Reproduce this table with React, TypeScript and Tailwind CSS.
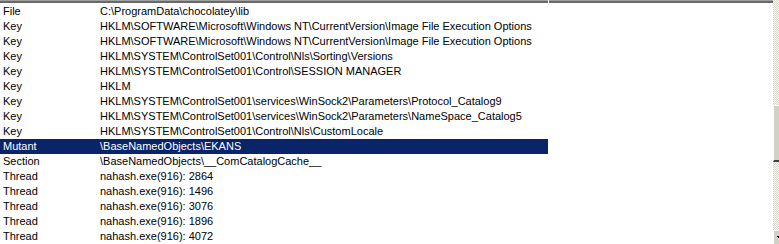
import React from 'react';

type Handle = { type: string; name: string };

const handles: Handle[] = [
    { type: 'File', name: 'C:\\ProgramData\\chocolatey\\lib' },
    { type: 'Key', name: 'HKLM\\SOFTWARE\\Microsoft\\Windows NT\\CurrentVersion\\Image File Execution Options' },
    { type: 'Key', name: 'HKLM\\SOFTWARE\\Microsoft\\Windows NT\\CurrentVersion\\Image File Execution Options' },
    { type: 'Key', name: 'HKLM\\SYSTEM\\ControlSet001\\Control\\Nls\\Sorting\\Versions' },
    { type: 'Key', name: 'HKLM\\SYSTEM\\ControlSet001\\Control\\SESSION MANAGER' },
    { type: 'Key', name: 'HKLM' },
    { type: 'Key', name: 'HKLM\\SYSTEM\\ControlSet001\\services\\WinSock2\\Parameters\\Protocol_Catalog9' },
    { type: 'Key', name: 'HKLM\\SYSTEM\\ControlSet001\\services\\WinSock2\\Parameters\\NameSpace_Catalog5' },
    { type: 'Key', name: 'HKLM\\SYSTEM\\ControlSet001\\Control\\Nls\\CustomLocale' },
    { type: 'Mutant', name: '\\BaseNamedObjects\\EKANS' },
    { type: 'Section', name: '\\BaseNamedObjects\\__ComCatalogCache__' },
    { type: 'Thread', name: 'nahash.exe(916): 2864' },
    { type: 'Thread', name: 'nahash.exe(916): 1496' },
    { type: 'Thread', name: 'nahash.exe(916): 3076' },
    { type: 'Thread', name: 'nahash.exe(916): 1896' },
    { type: 'Thread', name: 'nahash.exe(916): 4072' },
];

const SELECTED = 9;

const checker =
    'bg-[repeating-conic-gradient(#d4d0c8_0_25%,#ffffff_0_50%)] bg-[length:2px_2px]';

const App = () => {
    return (
        <div className="w-[779px] h-[244px] overflow-hidden bg-white flex font-['Liberation_Sans',Arial,sans-serif] text-[11px] text-black">
            <div className="w-[773px] flex flex-col">
                {/* column header bottom edge */}
                <div className="flex h-[3px] shrink-0">
                    <div className="w-[548px] border-t border-[#a0a0a0] border-b-2 border-b-[#696969] h-[3px]" />
                    <div className="w-[1px] bg-white" />
                    <div className="flex-1 border-t border-[#a0a0a0] border-b-2 border-b-[#696969] h-[3px]" />
                </div>
                <div className="h-[1px] shrink-0" />
                {handles.map((h, i) => (
                    <div
                        key={i}
                        className={`flex h-[15px] shrink-0 items-center w-[548px] leading-[15px] whitespace-nowrap ${
                            i === SELECTED ? 'bg-[#0a246a] text-white' : ''
                        }`}
                    >
                        <span className="w-[100px] pl-[3px] shrink-0">{h.type}</span>
                        <span>{h.name}</span>
                    </div>
                ))}
            </div>
            {/* vertical scrollbar, clipped at the window edge */}
            <div className="w-[6px] flex flex-col">
                <div className={`h-[105px] ${checker}`} />
                <div className="h-[57px] bg-[#d4d0c8] border-t border-l border-white border-b-2 border-b-[#404040]" />
                <div className={`flex-1 ${checker}`} />
                <div className="h-[14px] bg-[#d4d0c8] border-t border-l border-white relative">
                    <div className="absolute left-[3px] top-[5px] w-[3px] h-[1px] bg-black" />
                    <div className="absolute left-[4px] top-[6px] w-[2px] h-[1px] bg-black" />
                </div>
            </div>
        </div>
    );
};

export default App;
